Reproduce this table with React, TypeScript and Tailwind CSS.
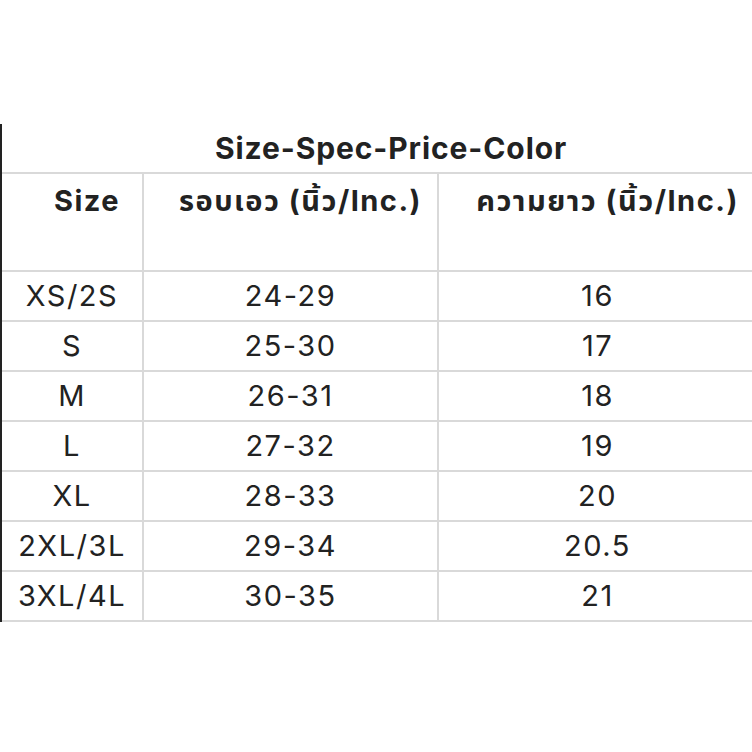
import React from "react";

const rows: [string, string, string][] = [
  ["XS/2S", "24-29", "16"],
  ["S", "25-30", "17"],
  ["M", "26-31", "18"],
  ["L", "27-32", "19"],
  ["XL", "28-33", "20"],
  ["2XL/3L", "29-34", "20.5"],
  ["3XL/4L", "30-35", "21"],
];

const font = {
  fontFamily: '"Inter", "Noto Sans", "Noto Sans Thai", "Liberation Sans", sans-serif',
};

export default function App() {
  return (
    <div className="w-[752px] h-[752px] bg-white pt-[124px] text-[#222]" style={font}>
      <div className="border-l-2 border-[#222]">
        <div className="h-[50px] border-b-2 border-[#d9d9d9] flex items-center justify-center pl-[28px] text-[30px] tracking-[0.9px] font-bold">
          Size-Spec-Price-Color
        </div>
        <div className="h-[98px] border-b-2 border-[#d9d9d9] flex text-[29px] tracking-[1.5px] font-bold">
          <div className="w-[142px] border-r-2 border-[#d9d9d9] flex justify-center pl-[30px] pt-[5px]">Size</div>
          <div className="w-[295px] border-r-2 border-[#d9d9d9] flex justify-center pl-[20px] pt-[5px]">รอบเอว (นิ้ว/Inc.)</div>
          <div className="flex-1 flex justify-center pl-[24px] pt-[5px]">ความยาว (นิ้ว/Inc.)</div>
        </div>
        {rows.map((r) => (
          <div key={r[0]} className="h-[50px] border-b-2 border-[#d9d9d9] flex text-[29px] tracking-[1.5px]">
            <div className="w-[142px] border-r-2 border-[#d9d9d9] flex items-center justify-center">{r[0]}</div>
            <div className="w-[295px] border-r-2 border-[#d9d9d9] flex items-center justify-center">{r[1]}</div>
            <div className="flex-1 flex items-center justify-center pl-[4px]">{r[2]}</div>
          </div>
        ))}
      </div>
    </div>
  );
}
